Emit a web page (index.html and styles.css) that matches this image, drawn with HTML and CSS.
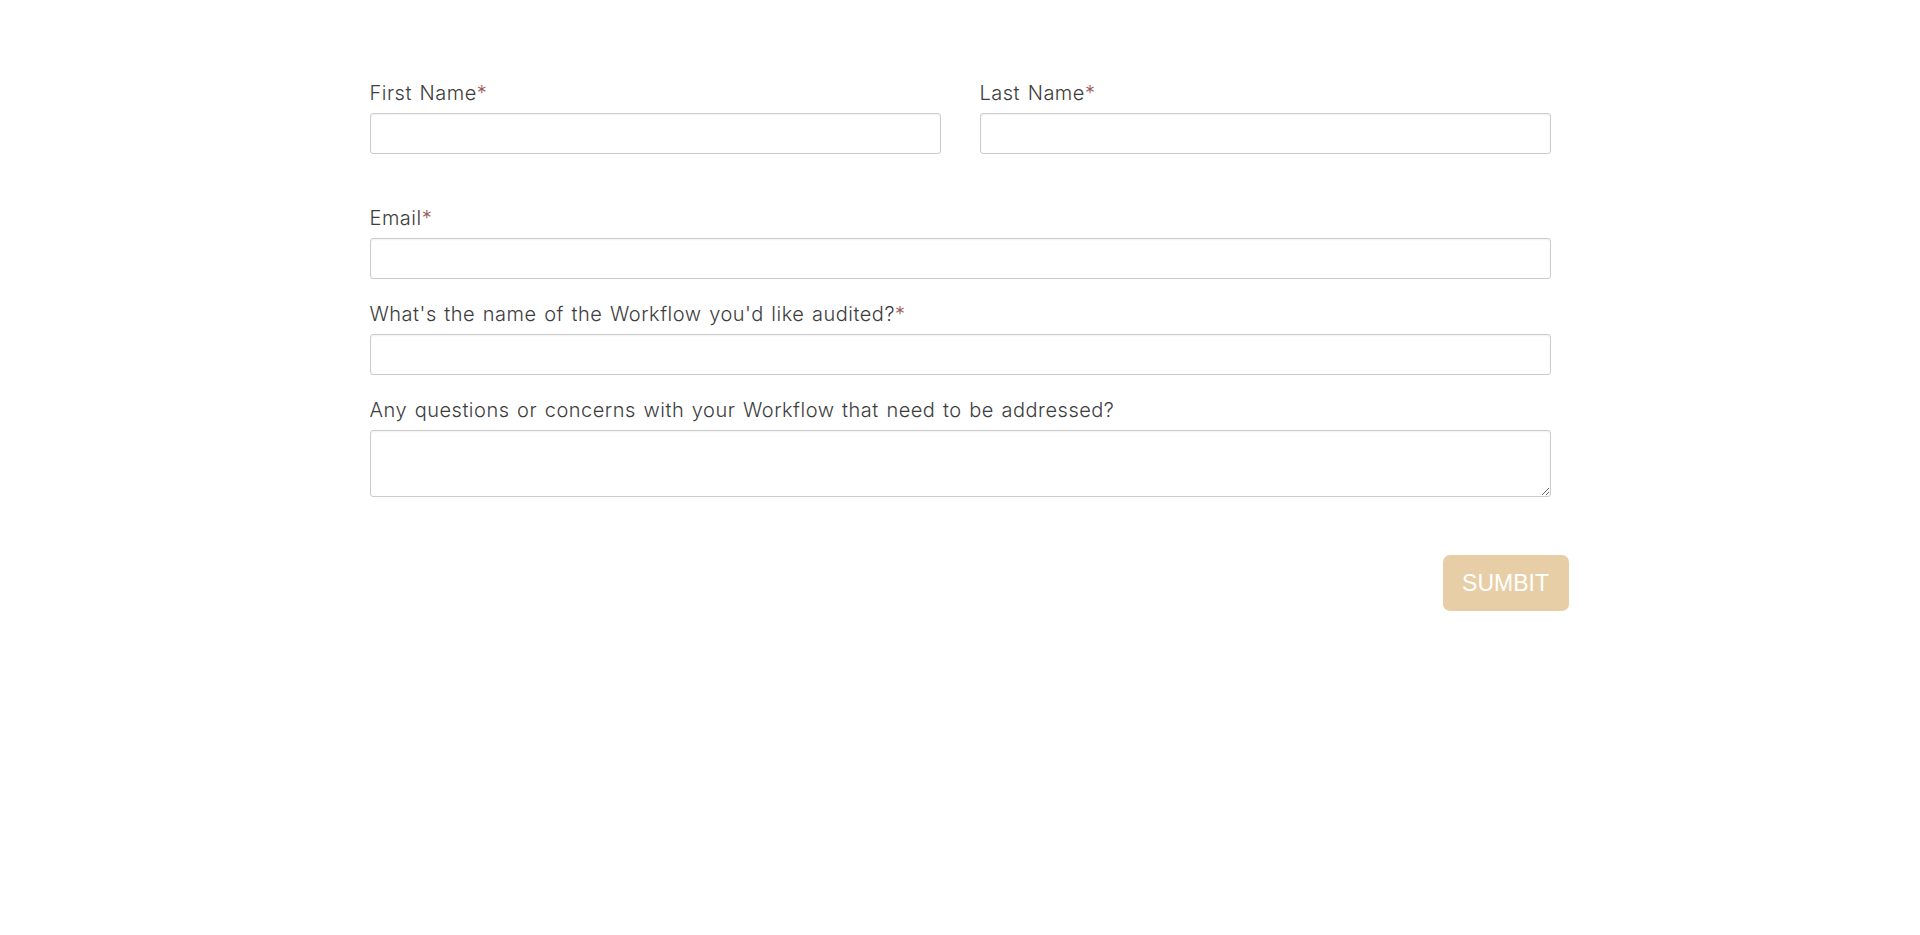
FILE: index.html
```html
<html lang="en">
<head>
    <meta charset="UTF-8">
    <meta name="viewport" content="width=device-width, initial-scale=1.0">
    <title>Workflow Audit</title>
    <link rel="stylesheet" href="styles.css">
</head>
<body>
    <div class="container">
        <form class="audit-form" onsubmit="return false;">
            <div class="row first-row">
                <div class="field">
                    <label for="first-name">First Name<span class="req">*</span></label>
                    <input type="text" id="first-name" />
                </div>
                <div class="field">
                    <label for="last-name">Last Name<span class="req">*</span></label>
                    <input type="text" id="last-name" />
                </div>
            </div>
            <div class="field">
                <label for="email">Email<span class="req">*</span></label>
                <input type="email" id="email" />
            </div>
            <div class="field">
                <label for="workflow">What's the name of the Workflow you'd like audited?<span class="req">*</span></label>
                <input type="text" id="workflow" />
            </div>
            <div class="field">
                <label for="questions">Any questions or concerns with your Workflow that need to be addressed?</label>
                <textarea id="questions"></textarea>
            </div>
            <div class="actions">
                <button type="submit" class="submit-btn">SUMBIT</button>
            </div>
        </form>
    </div>
</body>
</html>
```

FILE: styles.css
```css
body {
    margin: 0;
    background: #fff;
    font-family: Inter, 'Open Sans', sans-serif;
}
.container {
    width: 1181px;
    margin: 0 auto;
    padding-top: 79px;
}
.row { display: flex; gap: 39px; }
.row .field { flex: 1; }
.first-row { margin-bottom: 29px; }
.field { display: flex; flex-direction: column; margin-bottom: 21px; }
label {
    font-size: 20px;
    font-weight: 300;
    line-height: 26px;
    color: #3d3d3d;
    letter-spacing: 0.5px;
    word-spacing: 1.5px;
    padding-top: 1px;
    margin-bottom: 7px;
}
.req { color: #9b5a5a; }
input, textarea {
    box-sizing: border-box;
    width: 100%;
    height: 41px;
    margin: 0;
    border: 1px solid #ccc;
    border-radius: 3px;
    box-shadow: inset 0 1px 2px rgba(0, 0, 0, 0.06);
    font-size: 16px;
    padding: 8px 10px;
    font-family: inherit;
}
textarea { height: 67px; resize: vertical; }
.actions {
    display: flex;
    justify-content: flex-end;
    padding-top: 37px;
    margin-right: -18px;
}
.submit-btn {
    width: 126px;
    height: 56px;
    border: none;
    border-radius: 7px;
    background-color: #e8cea6;
    color: #fff;
    font-family: 'Liberation Sans', Arial, sans-serif;
    font-size: 23px;
    cursor: pointer;
}
```
